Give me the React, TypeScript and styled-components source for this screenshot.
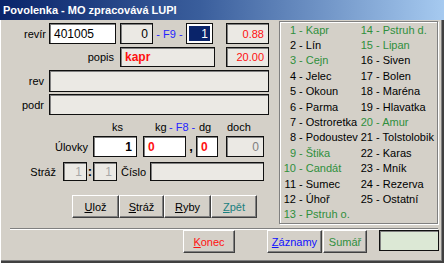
import React from 'react';
import styled, { createGlobalStyle } from 'styled-components';

const GlobalStyle = createGlobalStyle`
  html, body {
    margin: 0;
    padding: 0;
    background: #d4d0c8;
  }
`;

const Window = styled.div`
  width: 444px;
  height: 263px;
  background: #d4d0c8;
  font-family: "Liberation Sans", Arial, sans-serif;
  font-size: 11px;
  color: #000;
  display: flex;
  flex-direction: column;
  overflow: hidden;
`;

const TitleBar = styled.div`
  height: 20px;
  line-height: 21px;
  padding-left: 3px;
  background: linear-gradient(to right, #0a246a 0%, #3a5e9c 45%, #a6caf0 100%);
  color: #fff;
  font-weight: bold;
  font-size: 11px;
  white-space: nowrap;
`;

const Body = styled.div`
  flex: 1;
  display: flex;
  flex-direction: column;
  box-shadow: inset 1px 0 0 #fff, inset -1px -1px 0 #404040, inset -2px -2px 0 #404040,
    inset -3px -3px 0 #808080;
`;

const Main = styled.div`
  display: flex;
  margin-top: 1px;
  height: 203px;
`;

const LeftPanel = styled.div`
  width: 279px;
  display: flex;
  flex-direction: column;
`;

const Row = styled.div<{ $h: number; $top: number }>`
  display: flex;
  align-items: center;
  height: ${p => p.$h}px;
  margin-top: ${p => p.$top}px;
  white-space: nowrap;
`;

const Label = styled.span<{ $w: number; $pr?: number }>`
  width: ${p => p.$w}px;
  padding-right: ${p => p.$pr ?? 1}px;
  box-sizing: border-box;
  text-align: right;
  flex-shrink: 0;
`;

const Cell = styled.span<{ $w: number; $align?: string; $color?: string; $bold?: boolean; $size?: number; $pl?: number }>`
  width: ${p => p.$w}px;
  padding-left: ${p => p.$pl ?? 0}px;
  box-sizing: border-box;
  flex-shrink: 0;
  text-align: ${p => p.$align ?? 'left'};
  color: ${p => p.$color ?? '#000'};
  font-weight: ${p => (p.$bold ? 'bold' : 'normal')};
  font-size: ${p => p.$size ?? 11}px;
`;

const Field = styled.div<{
  $w: number;
  $ml?: number;
  $bg?: string;
  $color?: string;
  $align?: string;
  $bold?: boolean;
  $size?: number;
}>`
  width: ${p => p.$w}px;
  margin-left: ${p => p.$ml ?? 0}px;
  height: 100%;
  flex-shrink: 0;
  box-sizing: border-box;
  border: 1px solid #101010;
  box-shadow: inset 1px 1px 0 #808080;
  background: ${p => p.$bg ?? '#ebe9e4'};
  color: ${p => p.$color ?? '#000'};
  font-weight: ${p => (p.$bold ? 'bold' : 'normal')};
  font-size: ${p => p.$size ?? 11}px;
  padding: 0 4px;
  display: flex;
  align-items: center;
  justify-content: ${p => (p.$align === 'right' ? 'flex-end' : 'flex-start')};
`;

const SelectedField = styled.div<{ $w: number }>`
  width: ${p => p.$w}px;
  height: 100%;
  flex-shrink: 0;
  box-sizing: border-box;
  border: 1px solid #101010;
  background: #fff;
  padding: 2px;
  display: flex;
`;

const Selection = styled.div`
  flex: 1;
  background: #0a246a;
  color: #fff;
  font-size: 12px;
  padding-right: 2px;
  display: flex;
  align-items: center;
  justify-content: flex-end;
`;

const ButtonRow = styled.div`
  display: flex;
  margin-top: 14px;
  margin-left: 72px;
  height: 23px;
`;

const Button = styled.div<{ $w: number; $ml?: number; $color?: string }>`
  width: ${p => p.$w}px;
  margin-left: ${p => p.$ml ?? 0}px;
  height: 23px;
  box-sizing: border-box;
  border-top: 1px solid #fff;
  border-left: 1px solid #fff;
  border-right: 1px solid #404040;
  border-bottom: 1px solid #404040;
  box-shadow: inset -1px -1px 0 #808080;
  background: #d4d0c8;
  color: ${p => p.$color ?? '#000'};
  font-size: 11px;
  display: flex;
  align-items: center;
  justify-content: center;
  flex-shrink: 0;
  u {
    text-decoration: underline;
    text-underline-offset: 1px;
  }
`;

const ListBox = styled.div`
  width: 159px;
  height: 203px;
  box-sizing: border-box;
  border: 1px solid #808080;
  box-shadow: inset 1px 1px 0 #fff, 1px 1px 0 #fff;
  padding: 0 0 0 3px;
  display: grid;
  grid-template-rows: repeat(13, 15.4px);
  grid-template-columns: 77px auto;
  grid-auto-flow: column;
  font-size: 11px;
`;

const Fish = styled.div<{ $green: boolean }>`
  display: flex;
  align-items: center;
  white-space: pre;
  color: ${p => (p.$green ? '#2f8f3c' : '#000')};
`;

const FishNum = styled.span`
  width: 13px;
  text-align: right;
`;

const Separator = styled.div`
  margin: 4px 6px 0 10px;
  border-top: 1px solid #808080;
  border-bottom: 1px solid #fff;
`;

const BottomBar = styled.div`
  display: flex;
  align-items: flex-start;
  height: 23px;
`;

const StatusBox = styled.div`
  width: 60px;
  height: 21px;
  margin-left: 12px;
  box-sizing: border-box;
  border: 1px solid #101010;
  box-shadow: inset 1px 1px 0 #808080;
  background: #dce8d5;
`;

const fish: [number, string, boolean][] = [
  [1, 'Kapr', true],
  [2, 'Lín', false],
  [3, 'Cejn', true],
  [4, 'Jelec', false],
  [5, 'Okoun', false],
  [6, 'Parma', false],
  [7, 'Ostroretka', false],
  [8, 'Podoustev', false],
  [9, 'Štika', true],
  [10, 'Candát', true],
  [11, 'Sumec', false],
  [12, 'Úhoř', false],
  [13, 'Pstruh o.', true],
  [14, 'Pstruh d.', true],
  [15, 'Lipan', true],
  [16, 'Siven', false],
  [17, 'Bolen', false],
  [18, 'Maréna', false],
  [19, 'Hlavatka', false],
  [20, 'Amur', true],
  [21, 'Tolstolobik', false],
  [22, 'Karas', false],
  [23, 'Mník', false],
  [24, 'Rezerva', false],
  [25, 'Ostatní', false],
];

export default function App() {
  return (
    <Window>
      <GlobalStyle />
      <TitleBar>Povolenka - MO zpracovává LUPI</TitleBar>
      <Body>
        <Main>
          <LeftPanel>
            <Row $h={21} $top={2}>
              <Label $w={47}>revír</Label>
              <Field $w={67} $ml={2} $bg="#fff" $size={12}>401005</Field>
              <Field $w={33} $ml={4} $align="right" $size={12}>0</Field>
              <Cell $w={33} $align="center" $color="#2424ff">- F9 -</Cell>
              <SelectedField $w={27}>
                <Selection>1</Selection>
              </SelectedField>
              <Field $w={43} $ml={13} $align="right" $color="#ff1010">0.88</Field>
            </Row>
            <Row $h={20} $top={3}>
              <Label $w={116} $pr={2}>popis</Label>
              <Field $w={95} $ml={4} $color="#ff1010" $bold $size={12}>kapr</Field>
              <Field $w={43} $ml={11} $align="right" $color="#ff1010">20.00</Field>
            </Row>
            <Row $h={22} $top={3}>
              <Label $w={47} $pr={3}>rev</Label>
              <Field $w={220} $ml={2} />
            </Row>
            <Row $h={21} $top={2}>
              <Label $w={47} $pr={3}>podr</Label>
              <Field $w={220} $ml={2} />
            </Row>
            <Row $h={12} $top={6}>
              <Cell $w={112} />
              <Cell $w={43}>ks</Cell>
              <Cell $w={13}>kg</Cell>
              <Cell $w={30} $pl={1} $color="#2424ff">- F8 -</Cell>
              <Cell $w={29} $pl={1}>dg</Cell>
              <Cell $w={30}>doch</Cell>
            </Row>
            <Row $h={21} $top={3}>
              <Label $w={88} $pr={0}>Úlovky</Label>
              <Field $w={44} $ml={5} $bg="#fff" $align="right" $bold $size={12}>1</Field>
              <Field $w={43} $ml={6} $bg="#fff" $color="#ff1010" $bold $size={12}>0</Field>
              <Cell $w={10} $align="center" $bold $size={13}>,</Cell>
              <Field $w={22} $bg="#fff" $color="#ff1010" $bold $size={12}>0</Field>
              <Field $w={38} $ml={8} $align="right" $color="#808080" $size={12}>0</Field>
            </Row>
            <Row $h={19} $top={5}>
              <Label $w={57} $pr={1}>Stráž</Label>
              <Field $w={24} $ml={6} $align="right" $color="#a8a8a8" $size={12}>1</Field>
              <Cell $w={6} $align="center" $bold $size={13}>:</Cell>
              <Field $w={24} $align="right" $color="#a8a8a8" $size={12}>1</Field>
              <Cell $w={33} $pl={4}>Číslo</Cell>
              <Field $w={114} />
            </Row>
            <ButtonRow>
              <Button $w={47}><u>U</u>lož</Button>
              <Button $w={45}><u>S</u>tráž</Button>
              <Button $w={47}><u>R</u>yby</Button>
              <Button $w={46} $color="#1a8080"><u>Z</u>pět</Button>
            </ButtonRow>
          </LeftPanel>
          <ListBox>
            {fish.map(([n, name, green]) => (
              <Fish key={n} $green={green}>
                <FishNum>{n}</FishNum>
                {` - ${name}`}
              </Fish>
            ))}
          </ListBox>
        </Main>
        <Separator />
        <BottomBar>
          <Button $w={52} $ml={183} $color="#ff1010"><u>K</u>onec</Button>
          <Button $w={55} $ml={32} $color="#1010ff"><u>Z</u>áznamy</Button>
          <Button $w={44} $ml={1} $color="#2f8f3c">Sumář</Button>
          <StatusBox />
        </BottomBar>
      </Body>
    </Window>
  );
}
